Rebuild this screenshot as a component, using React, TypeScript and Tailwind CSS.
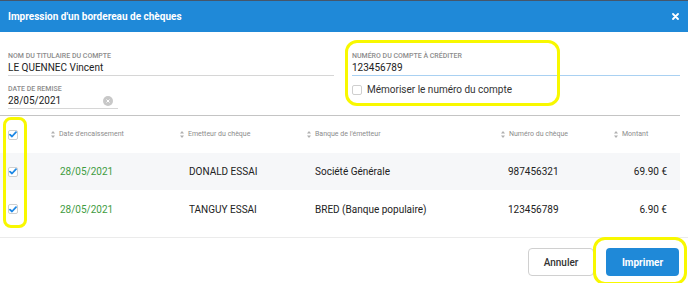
import React from "react";

type Row = { date: string; emetteur: string; banque: string; numero: string; montant: string; bg: string };

const ROWS: Row[] = [
  { date: "28/05/2021", emetteur: "DONALD ESSAI", banque: "Société Générale", numero: "987456321", montant: "69.90 €", bg: "bg-[#f6f7f9]" },
  { date: "28/05/2021", emetteur: "TANGUY ESSAI", banque: "BRED (Banque populaire)", numero: "123456789", montant: "6.90 €", bg: "bg-white" }
];

function SortIcon() {
  return (
    <svg width="4" height="7" viewBox="0 0 4 7" className="shrink-0">
      <path d="M2 0 L4 2.6 L0 2.6 Z" fill="#b0b0b0" />
      <path d="M2 7 L4 4.4 L0 4.4 Z" fill="#b0b0b0" />
    </svg>
  );
}

function Check({ checked }: { checked: boolean }) {
  return (
    <span className="flex h-[10px] w-[10px] items-center justify-center rounded-[2px] border border-[#cfcfcf] bg-white">
      {checked && (
        <svg width="8" height="7" viewBox="0 0 8 7">
          <path d="M1 3.6 L3 5.5 L7 1.2" fill="none" stroke="#1e88e5" strokeWidth="1.8" strokeLinecap="round" strokeLinejoin="round" />
        </svg>
      )}
    </span>
  );
}

const COLS = ["w-[129px]", "w-[127px]", "w-[194px]", "w-[113px]"];

export default function App() {
  return (
    <div className="relative h-[283px] w-[688px] overflow-hidden bg-white font-['Roboto',sans-serif] text-[#222]">
      {/* en-tête */}
      <div className="h-px bg-[#45566b]" />
      <div className="flex h-[31px] items-center justify-between bg-[#1f89d8] pl-2 pr-[9px]">
        <span className="text-[10px] font-bold text-white">Impression d'un bordereau de chèques</span>
        <svg width="7" height="7" viewBox="0 0 7 7">
          <path d="M1 1 L6 6 M6 1 L1 6" stroke="white" strokeWidth="1.8" strokeLinecap="round" />
        </svg>
      </div>

      {/* formulaire */}
      <div className="flex pl-2 pr-2 pt-5">
        <div className="w-[326px]">
          <div className="h-2 text-[7px] font-medium uppercase leading-[8px] text-[#8c8c8c]">Nom du titulaire du compte</div>
          <div className="mt-px h-[15px] border-b border-[#d6d6d6] text-[10px] leading-[14px]">LE QUENNEC Vincent</div>
          <div className="mt-[9px] h-2 text-[7px] font-medium uppercase leading-[8px] text-[#8c8c8c]">Date de remise</div>
          <div className="mt-px flex h-[15px] w-[110px] items-center justify-between border-b border-[#d6d6d6] text-[10px] leading-[14px]">
            <span>28/05/2021</span>
            <span className="mr-[5px] flex h-[10px] w-[10px] items-center justify-center rounded-full bg-[#c8c8c8]">
              <svg width="4" height="4" viewBox="0 0 4 4">
                <path d="M0.5 0.5 L3.5 3.5 M3.5 0.5 L0.5 3.5" stroke="white" strokeWidth="1" />
              </svg>
            </span>
          </div>
        </div>
        <div className="ml-[18px] flex-1">
          <div className="h-2 text-[7px] font-medium uppercase leading-[8px] text-[#8c8c8c]">Numéro du compte à créditer</div>
          <div className="mt-px h-[15px] border-b border-[#a9d1f2] text-[10px] leading-[14px]">123456789</div>
          <div className="mt-[7px] flex items-center gap-[5px]">
            <span className="h-[10px] w-[10px] rounded-[2px] border border-[#cfcfcf] bg-white" />
            <span className="text-[10px] leading-[14px] text-[#333]">Mémoriser le numéro du compte</span>
          </div>
        </div>
      </div>

      {/* tableau */}
      <div className="mr-2 mt-[6px] border-t border-[#c4c4c4]">
        <div className="flex h-[37px] items-center text-[7px] text-[#8c8c8c]">
          <div className="w-[51px] pl-2">
            <Check checked />
          </div>
          {["Date d'encaissement", "Emetteur du chèque", "Banque de l'émetteur", "Numéro du chèque"].map((h, i) => (
            <div key={h} className={`${COLS[i]} flex items-center gap-[4px]`}>
              <SortIcon />
              <span>{h}</span>
            </div>
          ))}
          <div className="flex flex-1 items-center gap-[4px]">
            <SortIcon />
            <span>Montant</span>
          </div>
        </div>
        {ROWS.map((r, idx) => (
          <div key={r.numero} className={`flex items-center text-[10px] ${r.bg} ${idx === 1 ? "h-[38px]" : "h-[37px]"}`}>
            <div className="w-[51px] pl-2">
              <Check checked />
            </div>
            <div className="w-[129px] pl-[9px] text-[#3f9c3f]">{r.date}</div>
            <div className="w-[127px] pl-[9px]">{r.emetteur}</div>
            <div className="w-[194px] pl-2">{r.banque}</div>
            <div className="w-[113px] pl-[7px]">{r.numero}</div>
            <div className="flex-1 pr-[13px] text-right">{r.montant}</div>
          </div>
        ))}
      </div>

      {/* pied */}
      <div className="mt-[9px] flex justify-end gap-[12px] border-t border-[#ebebeb] pr-[9px] pt-[10px]">
        <button className="h-[28px] w-[66px] rounded-[4px] border border-[#d0d0d0] bg-white text-[10px] font-medium text-[#333]">Annuler</button>
        <button className="h-[28px] w-[73px] rounded-[4px] bg-[#1f89d8] text-[10px] font-bold text-white">Imprimer</button>
      </div>

      {/* annotations */}
      <div className="pointer-events-none absolute left-[345px] top-[40px] h-[66px] w-[215px] rounded-[12px] border-[3px] border-[#f8f800]" />
      <div className="pointer-events-none absolute left-[3px] top-[117px] h-[111px] w-[24px] rounded-[8px] border-[3px] border-[#f8f800]" />
      <div className="pointer-events-none absolute left-[593px] top-[237px] h-[48px] w-[94px] rounded-[12px] border-[3px] border-[#f8f800]" />
    </div>
  );
}
